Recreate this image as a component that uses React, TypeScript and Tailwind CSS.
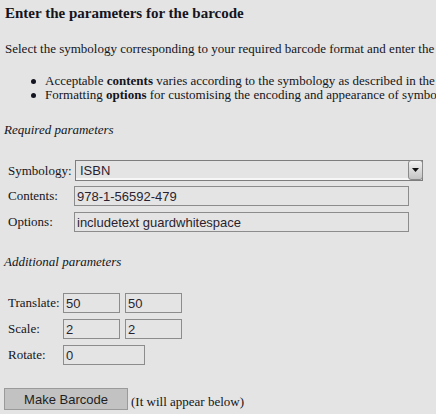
import React from "react";

const serif = { fontFamily: '"Liberation Serif", "Times New Roman", serif' };
const sans = { fontFamily: '"Liberation Sans", Arial, sans-serif' };

function Field({ value, w }: { value: string; w: string }) {
  return (
    <div
      className={`${w} shrink-0 h-[20px] border border-[#8c8c8c] bg-[#e4e4e4] flex items-center pl-[2px] text-[13px] text-[#2a1f30] leading-none overflow-hidden whitespace-nowrap`}
      style={sans}
    >
      {value}
    </div>
  );
}

export default function App() {
  return (
    <div
      className="w-[436px] h-[414px] bg-[#e4e4e4] overflow-hidden text-[#141420] text-[13px]"
      style={serif}
    >
      <div className="pl-[5px] mt-[3px] h-[20px] leading-[20px] text-[15px] font-bold whitespace-nowrap">
        Enter the parameters for the barcode
      </div>
      <div className="pl-[5px] mt-[18px] h-[15px] leading-[15px] whitespace-nowrap">
        Select the symbology corresponding to your required barcode format and enter the contents and options.
      </div>
      <ul className="mt-[18px] pl-[45px] whitespace-nowrap">
        <li className="relative h-[14px] leading-[14px]">
          <span className="absolute left-[-14px] top-[5px] w-[5px] h-[5px] rounded-full bg-[#141420]" />
          Acceptable <b>contents</b> varies according to the symbology as described in the table below.
        </li>
        <li className="relative h-[14px] leading-[14px]">
          <span className="absolute left-[-14px] top-[5px] w-[5px] h-[5px] rounded-full bg-[#141420]" />
          Formatting <b>options</b> for customising the encoding and appearance of symbology.
        </li>
      </ul>
      <div className="pl-[4px] mt-[20px] h-[15px] leading-[15px] italic">Required parameters</div>

      <div className="mt-[23px] flex flex-col">
        <div className="flex items-center h-[21px]">
          <div className="w-[74px] shrink-0 pl-[8px] whitespace-nowrap">Symbology:</div>
          <div
            className="ml-[1px] w-[348px] shrink-0 h-[21px] border border-[#7d7d7d] bg-[#e4e4e4] shadow-[inset_0_-2px_0_#f7f7f7] flex items-center"
            style={sans}
          >
            <span className="pl-[4px] flex-1 text-[13px] text-[#2a1f30] leading-none">ISBN</span>
            <div className="w-[15px] h-[20px] mr-[-1px] mt-[-1px] rounded-[3px] border border-[#8a8a8a] bg-gradient-to-b from-[#f2f2f2] to-[#c4c4c4] flex items-center justify-center">
              <svg width="7" height="4" viewBox="0 0 7 4">
                <path d="M0 0 H7 L3.5 4 Z" fill="#111" />
              </svg>
            </div>
          </div>
        </div>
        <div className="flex items-center mt-[5px] h-[20px]">
          <div className="w-[74px] shrink-0 pl-[8px] whitespace-nowrap">Contents:</div>
          <Field value="978-1-56592-479" w="w-[335px]" />
        </div>
        <div className="flex items-center mt-[6px] h-[20px]">
          <div className="w-[74px] shrink-0 pl-[8px] whitespace-nowrap">Options:</div>
          <Field value="includetext guardwhitespace" w="w-[335px]" />
        </div>
      </div>

      <div className="pl-[4px] mt-[22px] h-[15px] leading-[15px] italic">Additional parameters</div>

      <div className="mt-[24px] flex flex-col gap-[6px]">
        <div className="flex items-center h-[20px]">
          <div className="w-[63px] shrink-0 pl-[8px] whitespace-nowrap">Translate:</div>
          <Field value="50" w="w-[57px]" />
          <div className="w-[5px] shrink-0" />
          <Field value="50" w="w-[57px]" />
        </div>
        <div className="flex items-center h-[20px]">
          <div className="w-[63px] shrink-0 pl-[8px] whitespace-nowrap">Scale:</div>
          <Field value="2" w="w-[57px]" />
          <div className="w-[5px] shrink-0" />
          <Field value="2" w="w-[57px]" />
        </div>
        <div className="flex items-center h-[20px]">
          <div className="w-[63px] shrink-0 pl-[8px] whitespace-nowrap">Rotate:</div>
          <Field value="0" w="w-[82px]" />
        </div>
      </div>

      <div className="mt-[23px] flex items-end pl-[4px]">
        <div
          className="w-[124px] shrink-0 h-[22px] bg-[#c2c2c2] border border-[#9a9a9a] flex items-center justify-center text-[13px] text-[#1e1e1e] leading-none"
          style={sans}
        >
          Make Barcode
        </div>
        <span className="ml-[3px] leading-[15px] mb-[1px] whitespace-nowrap">(It will appear below)</span>
      </div>
    </div>
  );
}
